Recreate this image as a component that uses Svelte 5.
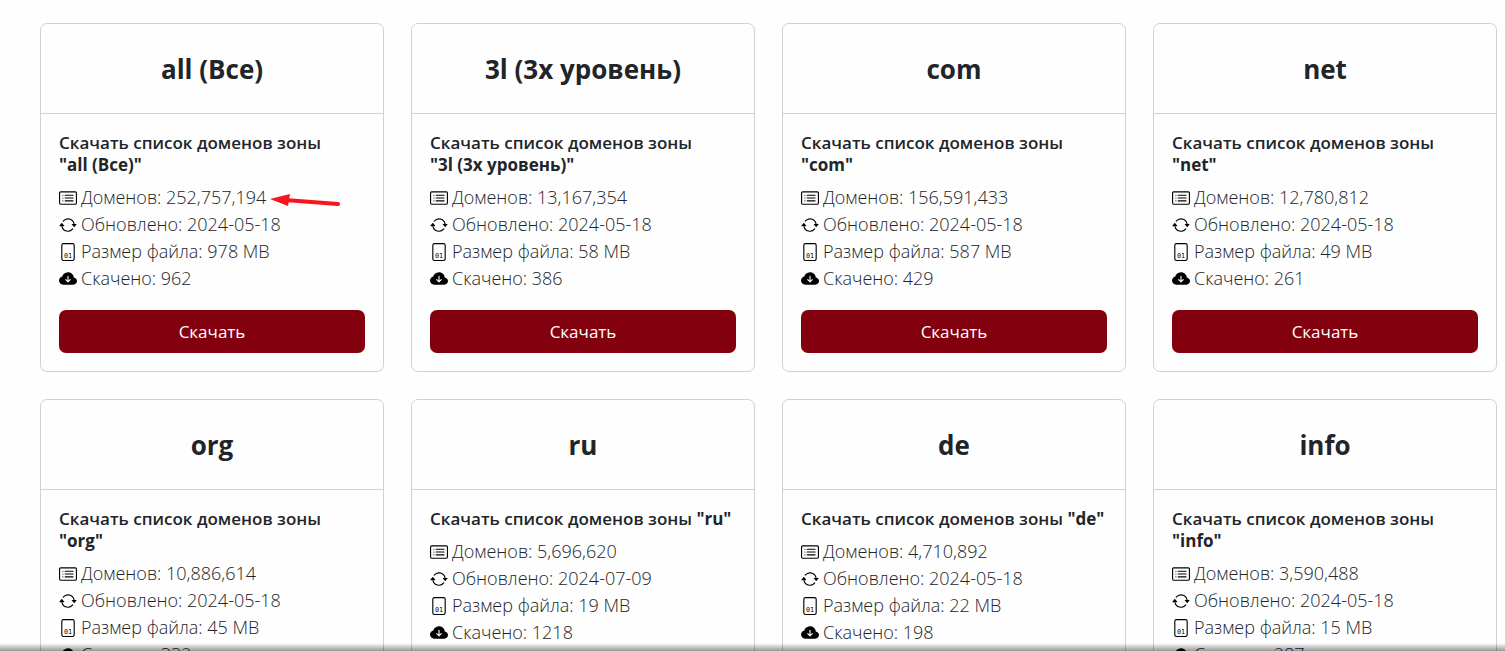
<script>
  const zones = [
    { name: "all (Все)", domains: "252,757,194", updated: "2024-05-18", size: "978 MB", downloads: 962, marked: true },
    { name: "3l (3x уровень)", domains: "13,167,354", updated: "2024-05-18", size: "58 MB", downloads: 386 },
    { name: "com", domains: "156,591,433", updated: "2024-05-18", size: "587 MB", downloads: 429 },
    { name: "net", domains: "12,780,812", updated: "2024-05-18", size: "49 MB", downloads: 261 },
    { name: "org", domains: "10,886,614", updated: "2024-05-18", size: "45 MB", downloads: 332 },
    { name: "ru", domains: "5,696,620", updated: "2024-07-09", size: "19 MB", downloads: 1218 },
    { name: "de", domains: "4,710,892", updated: "2024-05-18", size: "22 MB", downloads: 198 },
    { name: "info", domains: "3,590,488", updated: "2024-05-18", size: "15 MB", downloads: 287 }
  ];
</script>

<main>
  <div class="cards">
    {#each zones as zone}
      <article class="card">
        <header>
          <h2>{zone.name}</h2>
        </header>
        <div class="card-body">
          <h3>Скачать список доменов зоны <b>"{zone.name}"</b></h3>
          <ul>
            <li>
              <svg class="icon" viewBox="0 0 16 16" aria-hidden="true">
                <path d="M14.5 3a.5.5 0 0 1 .5.5v9a.5.5 0 0 1-.5.5h-13a.5.5 0 0 1-.5-.5v-9a.5.5 0 0 1 .5-.5zm-13-1A1.5 1.5 0 0 0 0 3.5v9A1.5 1.5 0 0 0 1.5 14h13a1.5 1.5 0 0 0 1.5-1.5v-9A1.5 1.5 0 0 0 14.5 2z" />
                <path d="M5 8a.5.5 0 0 1 .5-.5h7a.5.5 0 0 1 0 1h-7A.5.5 0 0 1 5 8m0-2.5a.5.5 0 0 1 .5-.5h7a.5.5 0 0 1 0 1h-7a.5.5 0 0 1-.5-.5m0 5a.5.5 0 0 1 .5-.5h7a.5.5 0 0 1 0 1h-7a.5.5 0 0 1-.5-.5m-1-5a.5.5 0 1 1-1 0 .5.5 0 0 1 1 0M4 8a.5.5 0 1 1-1 0 .5.5 0 0 1 1 0m0 2.5a.5.5 0 1 1-1 0 .5.5 0 0 1 1 0" />
              </svg>
              <span>Доменов: {zone.domains}</span>
              {#if zone.marked}
                <svg class="arrow" viewBox="0 0 70 16" aria-hidden="true">
                  <path d="M15 10L68 14" stroke="#f8141a" stroke-width="4" stroke-linecap="round" />
                  <path d="M0 9L20 4L18 16Z" fill="#f8141a" />
                </svg>
              {/if}
            </li>
            <li>
              <svg class="icon" viewBox="0 0 16 16" aria-hidden="true">
                <path d="M11.534 7h3.932a.25.25 0 0 1 .192.41l-1.966 2.36a.25.25 0 0 1-.384 0l-1.966-2.36a.25.25 0 0 1 .192-.41m-11 2h3.932a.25.25 0 0 0 .192-.41L2.692 6.23a.25.25 0 0 0-.384 0L.342 8.59A.25.25 0 0 0 .534 9" />
                <path d="M8 3c-1.552 0-2.94.707-3.857 1.818a.5.5 0 1 1-.771-.636A6.002 6.002 0 0 1 13.917 7H12.9A5 5 0 0 0 8 3M3.1 9a5.002 5.002 0 0 0 8.757 2.182.5.5 0 1 1 .771.636A6.002 6.002 0 0 1 2.083 9z" />
              </svg>
              <span>Обновлено: {zone.updated}</span>
            </li>
            <li>
              <svg class="icon" viewBox="0 0 16 16" aria-hidden="true">
                <path d="M4 0a2 2 0 0 0-2 2v12a2 2 0 0 0 2 2h8a2 2 0 0 0 2-2V2a2 2 0 0 0-2-2zm0 1h8a1 1 0 0 1 1 1v12a1 1 0 0 1-1 1H4a1 1 0 0 1-1-1V2a1 1 0 0 1 1-1" />
                <text x="8" y="13" text-anchor="middle">01</text>
              </svg>
              <span>Размер файла: {zone.size}</span>
            </li>
            <li>
              <svg class="icon" viewBox="0 0 16 16" aria-hidden="true">
                <path d="M8 2a5.53 5.53 0 0 0-3.594 1.342c-.766.66-1.321 1.52-1.464 2.383C1.266 6.095 0 7.555 0 9.318 0 11.366 1.708 13 3.781 13h8.906C14.502 13 16 11.57 16 9.773c0-1.636-1.242-2.969-2.834-3.194C12.923 3.999 10.69 2 8 2m2.354 6.854-2 2a.5.5 0 0 1-.708 0l-2-2a.5.5 0 1 1 .708-.708L7.5 9.293V5.5a.5.5 0 0 1 1 0v3.793l1.146-1.147a.5.5 0 0 1 .708.708" />
              </svg>
              <span>Скачено: {zone.downloads}</span>
            </li>
          </ul>
          <button type="button">Скачать</button>
        </div>
      </article>
    {/each}
  </div>
  <div class="bottom-shadow"></div>
</main>

<style>
  :global(body) {
    background: #fefefe;
  }

  main {
    padding: 23px 8px 27px 40px;
    color: #212529;
    font-family: "Open Sans", "Noto Sans", sans-serif;
    font-size: 17px;
    line-height: 27px;
  }

  .cards {
    display: grid;
    grid-template-columns: repeat(4, minmax(0, 1fr));
    gap: 27px;
  }

  .card {
    display: flex;
    flex-direction: column;
    border: 1px solid #d0d1d2;
    border-radius: 7px;
  }

  header {
    padding: 29px 18px 27px;
    border-bottom: 1px solid #d0d1d2;
    text-align: center;
  }

  h2 {
    margin: 0;
    font-size: 26px;
    font-weight: 700;
    line-height: 33px;
  }

  .card-body {
    display: flex;
    flex: 1;
    flex-direction: column;
    padding: 18px;
  }

  h3 {
    margin: 0 0 8px;
    font-size: 17px;
    font-weight: 600;
    line-height: 22px;
  }

  b {
    font-weight: 700;
    white-space: nowrap;
  }

  ul {
    margin: 0 0 18px;
    padding: 0;
    list-style: none;
    font-size: 18px;
    font-weight: 300;
  }

  li {
    display: flex;
    align-items: center;
    gap: 4px;
    white-space: nowrap;
  }

  .icon {
    flex: none;
    width: 18px;
    height: 18px;
    fill: #000;
  }

  .icon text {
    font: 400 6px "DejaVu Sans Mono", monospace;
  }

  .arrow {
    flex: none;
    width: 70px;
    height: 16px;
  }

  button {
    width: 100%;
    padding: 8px 14px;
    border: 0;
    border-radius: 7px;
    background: #83000f;
    color: #fff;
    font: inherit;
    cursor: pointer;
  }

  button:hover {
    background: #6b000c;
  }

  .bottom-shadow {
    position: fixed;
    right: 0;
    bottom: 0;
    left: 0;
    height: 8px;
    background: linear-gradient(transparent, rgba(0, 0, 0, 0.4));
    pointer-events: none;
  }
</style>
